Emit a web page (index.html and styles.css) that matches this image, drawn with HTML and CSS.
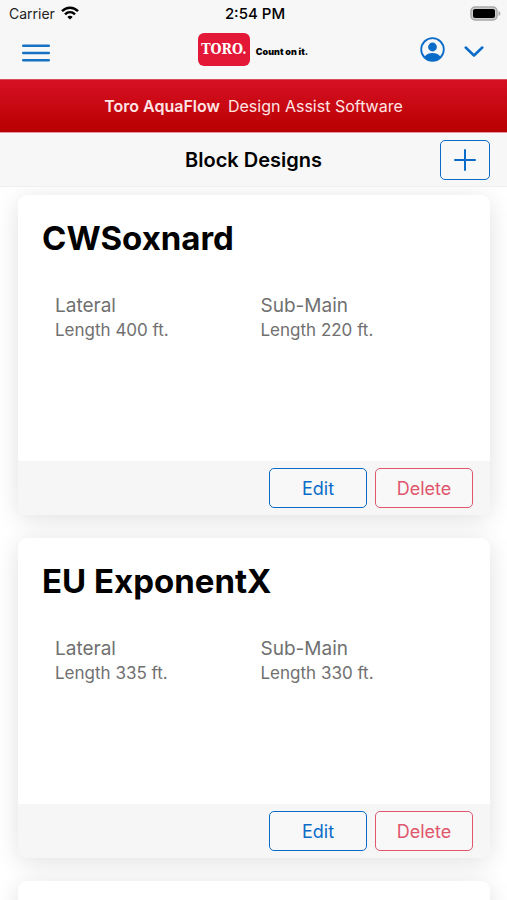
FILE: index.html
```html
<!DOCTYPE html>
<html lang="en">
<head>
<meta charset="utf-8">
<meta name="viewport" content="width=device-width, initial-scale=1">
<title>Block Designs</title>
<link rel="stylesheet" href="styles.css">
</head>
<body>
<div class="app">
  <div class="status">
    <div class="carrier">
      <span>Carrier</span>
      <svg width="18" height="14" viewBox="0 0 18 14" fill="none" stroke="#000" stroke-width="2.4">
        <path d="M1 5.2C5.6.6 12.400.6 17 5.2"/>
        <path d="M4 8.400C6.900 5.600 11.100 5.600 14 8.400"/>
        <path d="M9 13.600L6.300 10.900C7.800 9.500 10.200 9.500 11.700 10.900Z" fill="#000" stroke="none"/>
      </svg>
    </div>
    <time class="clock">2:54 PM</time>
    <svg class="battery" width="31" height="15" viewBox="0 0 31 15">
      <rect x="1" y="1" width="26" height="13" rx="4" fill="#ccc" stroke="#aaa" stroke-width="1.500"/>
      <rect x="3" y="3" width="22" height="9" rx="2" fill="#000"/>
      <path d="M28.500 5C31 6 31 9 28.500 10Z" fill="#aaa"/>
    </svg>
  </div>
  <header class="toolbar">
    <button class="icon-button menu" type="button" aria-label="Menu">
      <svg width="28" height="18" viewBox="0 0 28 18" stroke="#1670c4" stroke-width="2.400" stroke-linecap="round"><path d="M1.200 1.700H26.800M1.200 9H26.800M1.200 16.300H26.800"/></svg>
    </button>
    <div class="brand">
      <span class="logo">TORO.</span>
      <span class="tagline">Count on it.</span>
    </div>
    <div class="actions">
      <button class="icon-button" type="button" aria-label="Account">
        <svg width="25" height="25" viewBox="0 0 25 25">
          <circle cx="12.500" cy="12.500" r="11.300" fill="none" stroke="#0a6cc8" stroke-width="1.800"/>
          <circle cx="12.500" cy="10" r="4.400" fill="#0a6cc8"/>
          <path d="M4.600 19.500C6.500 17 9.300 16 12.500 16S18.500 17 20.400 19.500C18.400 22 15.500 23.500 12.500 23.500S6.600 22 4.600 19.500Z" fill="#0a6cc8"/>
        </svg>
      </button>
      <button class="icon-button" type="button" aria-label="More">
        <svg width="20" height="25" viewBox="0 0 20 25" fill="none" stroke="#0a6cc8" stroke-width="2.500" stroke-linecap="round" stroke-linejoin="round"><path d="M1.700 10.500L10 18.500L18.300 10.500"/></svg>
      </button>
    </div>
  </header>
  <div class="banner"><strong>Toro AquaFlow</strong><span>Design Assist Software</span></div>
  <div class="titlebar">
    <h1>Block Designs</h1>
    <button class="button add" type="button" aria-label="Add block design">
      <svg width="22" height="22" viewBox="0 0 22 22" stroke="#0a6cc8" stroke-width="2" stroke-linecap="round"><path d="M11 1V21M1 11H21"/></svg>
    </button>
  </div>
  <main class="list">
    <article class="card">
      <div class="body">
        <h2>CWSoxnard</h2>
        <div class="details">
          <div><h3>Lateral</h3><p>Length 400 ft.</p></div>
          <div><h3>Sub-Main</h3><p>Length 220 ft.</p></div>
        </div>
      </div>
      <footer><button class="button edit" type="button">Edit</button><button class="button delete" type="button">Delete</button></footer>
    </article>
    <article class="card">
      <div class="body">
        <h2>EU ExponentX</h2>
        <div class="details">
          <div><h3>Lateral</h3><p>Length 335 ft.</p></div>
          <div><h3>Sub-Main</h3><p>Length 330 ft.</p></div>
        </div>
      </div>
      <footer><button class="button edit" type="button">Edit</button><button class="button delete" type="button">Delete</button></footer>
    </article>
    <article class="card"><div class="body"></div></article>
  </main>
</div>
</body>
</html>
```
FILE: styles.css
```css
* { box-sizing: border-box; }
body, h1, h2, h3, p { margin: 0; }
body {
  font-family: Inter, "Liberation Sans", sans-serif;
  color: #000;
  background: #fff;
}
button { font: inherit; cursor: pointer; }
svg { display: block; }

.app {
  display: flex;
  flex-direction: column;
  height: 100vh;
  overflow: hidden;
}
.status, .toolbar, .banner, .titlebar { flex: none; }

.status {
  display: grid;
  grid-template-columns: 1fr auto 1fr;
  align-items: center;
  height: 26px;
  padding: 0 6px 0 9px;
  background: #f7f7f7;
  font-size: 14px;
}
.carrier { display: flex; align-items: center; gap: 6px; color: #222; }
.clock { font-size: 15px; font-weight: 500; }
.battery { justify-self: end; }

.toolbar {
  display: grid;
  grid-template-columns: 1fr auto 1fr;
  align-items: center;
  height: 53px;
  padding: 0 23px 6px 22px;
  background: #f7f7f7;
}
.icon-button { padding: 0; border: 0; background: none; }
.menu { justify-self: start; padding-top: 6px; }
.brand { display: flex; align-items: center; gap: 6px; }
.logo {
  width: 52px;
  height: 33px;
  border-radius: 6px;
  background: #e31837;
  color: #fff;
  font: bold condensed 14px/33px "DejaVu Serif Condensed", "DejaVu Serif", serif;
  text-align: center;
}
.tagline { padding-top: 4px; font-size: 9px; font-weight: 900; }
.actions { display: flex; justify-content: flex-end; align-items: center; gap: 19px; }

.banner {
  display: flex;
  justify-content: center;
  align-items: center;
  gap: 8px;
  height: 54px;
  border-bottom: 1px solid #e79a9d;
  border-top: 1px solid #d8505e;
  background: linear-gradient(#d71024, #b80000);
  color: #ffe4e4;
  font-size: 16px;
  font-weight: 400;
}
.banner strong { font-weight: 600; }

.titlebar {
  display: grid;
  grid-template-columns: 1fr auto 1fr;
  align-items: center;
  height: 54px;
  padding: 0 17px;
  border-bottom: 1px solid #efefef;
  background: #f7f7f7;
}
.titlebar h1 { grid-column: 2; font-size: 20px; font-weight: 600; }

.button {
  width: 98px;
  height: 40px;
  padding: 0;
  border: 1px solid;
  border-radius: 5px;
  background: #f8f8f8;
  font-size: 18px;
}
.add { display: grid; place-items: center; justify-self: end; width: 50px; }
.add, .edit { color: #0a6cc8; }
.delete { color: #e0566c; }

.list {
  display: flex;
  flex-direction: column;
  flex: 1;
  gap: 23px;
  min-height: 0;
  padding: 8px 17px 0 18px;
  overflow: hidden;
}
.card {
  flex: none;
  border-radius: 9px;
  overflow: hidden;
  background: #fff;
  box-shadow: 0 4px 24px rgba(0, 0, 0, .12);
}
.body { min-height: 266px; padding: 23px 24px; }
.card h2 { font-size: 33px; line-height: 40px; font-weight: 700; }
.details {
  display: grid;
  grid-template-columns: 1fr 1fr;
  padding: 35px 0 0 13px;
  color: #707070;
}
.details h3 { font-size: 19px; line-height: 25px; font-weight: 400; }
.details p { font-size: 17px; line-height: 25px; }
.card footer {
  display: flex;
  justify-content: flex-end;
  gap: 8px;
  padding: 7px 17px;
  background: #f6f6f6;
}
```
